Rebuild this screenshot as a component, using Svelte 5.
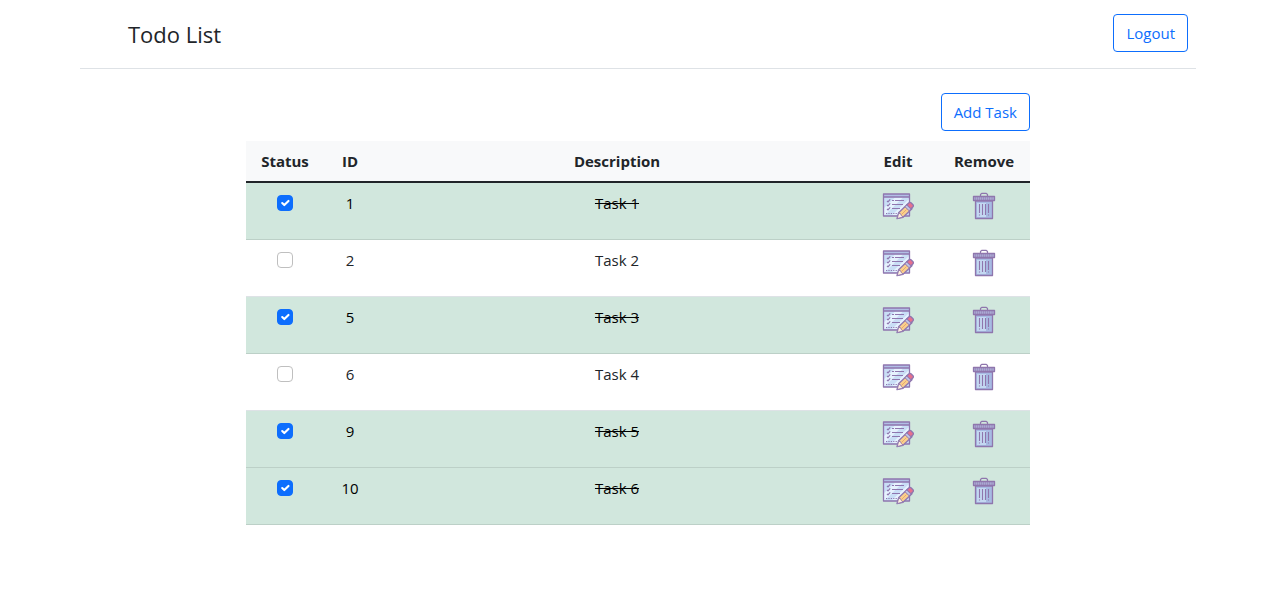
<script>
  let tasks = $state([
    { id: 1, text: 'Task 1', done: true },
    { id: 2, text: 'Task 2', done: false },
    { id: 5, text: 'Task 3', done: true },
    { id: 6, text: 'Task 4', done: false },
    { id: 9, text: 'Task 5', done: true },
    { id: 10, text: 'Task 6', done: true }
  ]);

  function remove(id) {
    tasks = tasks.filter((t) => t.id !== id);
  }
</script>

<div class="page">
  <header>
    <h1>Todo List</h1>
    <button class="btn" type="button">Logout</button>
  </header>

  <main>
    <div class="toolbar">
      <button class="btn" type="button">Add Task</button>
    </div>
    <table>
      <colgroup>
        <col class="c-status" />
        <col class="c-id" />
        <col />
        <col class="c-edit" />
        <col class="c-remove" />
      </colgroup>
      <thead>
        <tr>
          <th>Status</th>
          <th>ID</th>
          <th>Description</th>
          <th>Edit</th>
          <th>Remove</th>
        </tr>
      </thead>
      <tbody>
        {#each tasks as task (task.id)}
          <tr class:done={task.done}>
            <td><input type="checkbox" aria-label={task.text} bind:checked={task.done} /></td>
            <td>{task.id}</td>
            <td class="text">{task.text}</td>
            <td>
              <button class="icon" type="button" aria-label="Edit">
                <svg width="32" height="32" viewBox="0 0 32 32" fill="none" stroke="#8f76af" stroke-linejoin="round">
                  <path d="M1.500 3h26v22h-26z" fill="#c9def6" stroke="none" />
                  <path d="M2 17L13 6.500h8L3 24H2zM10 24L27 8v5L16 24z" fill="#e6f2fe" stroke="none" />
                  <path d="M2 3h25v3H2z" fill="#b1bfe5" stroke="none" />
                  <path d="M1.500 3h26v22h-26zM2 6h25" stroke-width="1.300" />
                  <path d="M5 9.800l1 1 2.200-2.500M5 13.800l1 1 2.200-2.500M5 17.800l1 1 2.200-2.500" stroke-width="1.200" />
                  <path d="M10 9.500h2M13 9.500h9M10 13.500h11M10 17.500h8" stroke-width="1.100" />
                  <path d="M4 22.500h11" stroke-dasharray="1.200 1.200" />
                  <path d="M15 27.700l1.600-5.900 8.900-8.600 4.500 4.500-9 8.600z" fill="#fad08c" stroke-width="1.300" />
                  <path d="M15.200 27.500l1.500-5.300 2 .6.600 1.700 1.900 1.500z" fill="#fff0df" stroke-width=".9" />
                  <path d="M24.700 14l2.300-2.300q1-.8 2 0l2 2q.9 1 0 2L28.800 18z" fill="#e7708e" stroke-width="1.300" />
                  <path d="M23 15.700l1.700-1.700 4.100 4-1.700 1.700z" fill="#c4cae9" />
                  <path d="M19.500 23.500l5-5" stroke="#e9a870" />
                </svg>
              </button>
            </td>
            <td>
              <button class="icon" type="button" aria-label="Remove" onclick={() => remove(task.id)}>
                <svg width="32" height="32" viewBox="0 0 32 32" fill="none" stroke="#8f76ad" stroke-linejoin="round">
                  <path d="M12.500 5.500V3.500l1.200-1.200h4.600l1.200 1.200v2" stroke-width="1.200" />
                  <path d="M7.500 9.500h17v18h-17z" fill="#a7bbe3" stroke-width="1.300" />
                  <path d="M9 12h9v14H9z" fill="#c4d8f1" stroke="none" />
                  <path d="M5.500 5.500h21v4h-21z" fill="#aaaad3" stroke-width="1.300" />
                  <path d="M7.500 6v3M9.500 6v3M11.500 6v3M13.500 6v3M15.500 6v3M17.500 6v3M19.500 6v3M21.500 6v3M24 6v3" stroke-opacity=".45" />
                  <path d="M8 10.500h16" stroke-opacity=".5" />
                  <path d="M11.500 13v9M11.500 23.500v1M14.500 13v11M17.500 13v11M20.500 13v9M20.500 23.500v1" stroke-width="1.100" />
                </svg>
              </button>
            </td>
          </tr>
        {/each}
      </tbody>
    </table>
  </main>
</div>

<style>
  :global(body) {
    background: #fff;
    color: #212529;
    font-family: "Segoe UI", "Open Sans", "Noto Sans", sans-serif;
    font-size: 15px;
    line-height: 24px;
  }
  .page {
    max-width: 1116px;
    margin: 0 auto;
    padding: 0 5px 0 0;
  }
  header {
    display: flex;
    justify-content: space-between;
    align-items: flex-start;
    padding: 14px 8px 16px 48px;
    border-bottom: 1px solid #dee2e6;
  }
  h1 {
    margin: 0;
    padding-top: 4px;
    font-size: 22px;
    font-weight: 400;
    line-height: 32px;
  }
  .btn {
    padding: 6px 12px;
    border: 1px solid #0d6efd;
    border-radius: 4px;
    background: #fff;
    color: #0d6efd;
    font: inherit;
    cursor: pointer;
  }
  main {
    max-width: 784px;
    margin: 0 auto;
    padding-top: 24px;
  }
  .toolbar {
    display: flex;
    justify-content: flex-end;
    margin-bottom: 10px;
  }
  table {
    width: 100%;
    table-layout: fixed;
    border-collapse: separate;
    border-spacing: 0;
    text-align: center;
  }
  .c-status { width: 78px; }
  .c-id { width: 52px; }
  .c-edit { width: 80px; }
  .c-remove { width: 92px; }
  th {
    padding: 8px 0;
    background: #f8f9fa;
    border-bottom: 2px solid #212529;
    font-weight: 700;
  }
  td {
    height: 40px;
    padding: 8px 0;
    vertical-align: top;
    border-bottom: 1px solid #dee2e6;
  }
  .done td {
    background: #d1e7dd;
    border-bottom-color: #bcd0c7;
    color: #000;
  }
  .done .text {
    text-decoration: line-through;
  }
  input {
    appearance: none;
    display: block;
    width: 16px;
    height: 16px;
    margin: 4px auto 0;
    border: 1px solid #bfbfbf;
    border-radius: 4px;
    background: #fff;
  }
  input:checked {
    border-color: #0d6efd;
    background: #0d6efd url("data:image/svg+xml,%3Csvg xmlns='http://www.w3.org/2000/svg' viewBox='0 0 20 20'%3E%3Cpath fill='none' stroke='white' stroke-linecap='round' stroke-linejoin='round' stroke-width='3' d='M6 10l3 3l6-6'/%3E%3C/svg%3E") center / contain no-repeat;
  }
  .icon {
    display: block;
    width: 32px;
    height: 32px;
    margin: 0 auto;
    padding: 0;
    border: 0;
    background: none;
    cursor: pointer;
  }
  .icon svg {
    display: block;
  }
</style>
